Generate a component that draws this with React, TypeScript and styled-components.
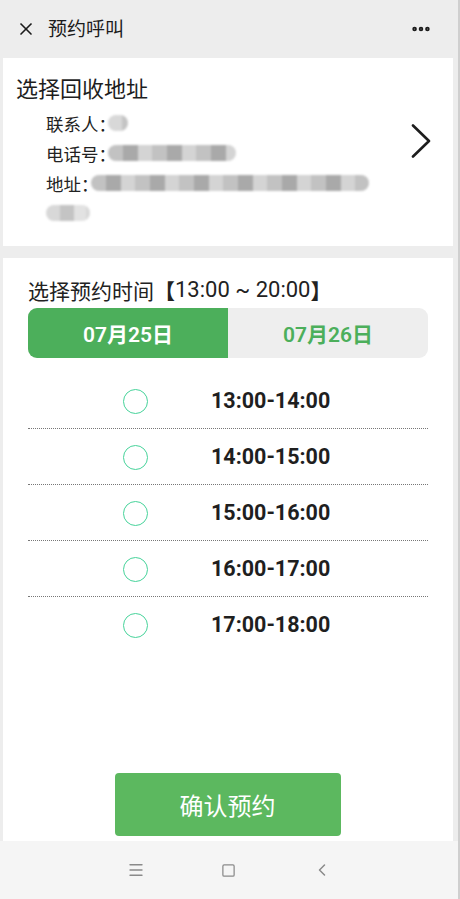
import React from "react";
import styled, { createGlobalStyle } from "styled-components";
import { X, MoreHorizontal, Menu, Square, ChevronLeft } from "lucide-react";

const GlobalStyle = createGlobalStyle`
  html, body {
    margin: 0;
    padding: 0;
    background: #ededed;
  }
  body {
    font-family: "Noto Sans CJK SC", "Noto Sans", Roboto, sans-serif;
  }
`;

const Page = styled.div`
  width: 460px;
  height: 899px;
  display: flex;
  flex-direction: column;
  background: #ededed;
  border-right: 2px solid #cfcfcf;
  box-sizing: border-box;
  overflow: hidden;
`;

const TopBar = styled.div`
  height: 57px;
  display: flex;
  align-items: center;
  padding: 0 26px 0 16px;
  color: #1b1b1b;
`;

const TopTitle = styled.div`
  margin-left: 12px;
  font-size: 19px;
  flex: 1;
  margin-top: -2px;
`;

const Card = styled.div<{ $grow?: boolean }>`
  background: #ffffff;
  margin: 1px 5px 0 3px;
  ${(p) => (p.$grow ? "flex: 1;" : "")}
`;

const AddressCard = styled(Card)`
  height: 188px;
  display: flex;
  align-items: center;
  padding: 0 22px 0 13px;
`;

const AddressBody = styled.div`
  flex: 1;
  align-self: flex-start;
  padding-top: 13px;
`;

const SectionTitle = styled.div`
  font-size: 22px;
  color: #1e1e1e;
  line-height: 32px;
`;

const InfoLine = styled.div`
  display: flex;
  align-items: center;
  height: 30px;
  margin-left: 30px;
  font-size: 17.5px;
  color: #222;
`;

const Blur = styled.div<{ $dark?: boolean }>`
  height: 16px;
  border-radius: 8px;
  filter: blur(1.2px);
  background: ${(p) =>
    p.$dark
      ? "repeating-linear-gradient(90deg, #c2c2c2 0 15px, #a9a9a9 15px 30px, #d4d4d4 30px 44px)"
      : "repeating-linear-gradient(90deg, #d8d8d8 0 14px, #c4c4c4 14px 28px, #e2e2e2 28px 40px)"};
`;

const Chevron = styled.svg`
  margin-top: -22px;
  flex-shrink: 0;
`;

const TimeCard = styled(Card)`
  margin-top: 12px;
  padding: 18px 25px 0 25px;
  display: flex;
  flex-direction: column;
`;

const TimeTitle = styled.div`
  font-size: 21px;
  color: #222;
  line-height: 28px;
  display: flex;
  align-items: center;
`;

const Bracket = styled.span`
  font-weight: bold;
`;

const Range = styled.span`
  font-family: Roboto, sans-serif;
  font-size: 22px;
`;

const Tabs = styled.div`
  margin-top: 4px;
  height: 50px;
  display: flex;
  border-radius: 9px;
  overflow: hidden;
  background: #eeeeee;
`;

const Tab = styled.div<{ $active?: boolean }>`
  flex: 1;
  display: flex;
  align-items: center;
  justify-content: center;
  font-size: 21px;
  font-weight: 600;
  background: ${(p) => (p.$active ? "#4caf5b" : "transparent")};
  color: ${(p) => (p.$active ? "#ffffff" : "#4caf5b")};
  font-family: Roboto, "Noto Sans CJK SC", sans-serif;
`;

const SlotList = styled.div`
  margin-top: 15px;
`;

const Slot = styled.div<{ $last?: boolean }>`
  height: 55px;
  display: flex;
  align-items: center;
  padding-left: 95px;
  border-bottom: 1px dotted ${(p) => (p.$last ? "transparent" : "#777")};
`;

const Radio = styled.div`
  width: 23px;
  height: 23px;
  border-radius: 50%;
  border: 1.6px solid #46d39a;
  margin-top: 2px;
`;

const SlotText = styled.div`
  margin-left: 63px;
  font-size: 21.5px;
  font-weight: bold;
  color: #1f1f1f;
  font-family: Roboto, sans-serif;
`;

const ButtonRow = styled.div`
  margin-top: auto;
  display: flex;
  justify-content: center;
  padding-bottom: 5px;
  padding-right: 1px;
`;

const ConfirmButton = styled.button`
  width: 226px;
  height: 63px;
  border: none;
  border-radius: 4px;
  background: #5cb85f;
  color: #fff;
  font-size: 24px;
  font-family: "Noto Sans CJK SC", sans-serif;
`;

const NavBar = styled.div`
  height: 58px;
  background: #f5f5f5;
  display: flex;
  align-items: center;
  justify-content: center;
  gap: 76px;
  color: #8a8a8a;
`;

const slots = ["13:00-14:00", "14:00-15:00", "15:00-16:00", "16:00-17:00", "17:00-18:00"];

export default function App() {
  return (
    <>
      <GlobalStyle />
      <Page>
        <TopBar>
          <X size={20} strokeWidth={2} />
          <TopTitle>预约呼叫</TopTitle>
          <MoreHorizontal size={22} strokeWidth={3} />
        </TopBar>
        <AddressCard>
          <AddressBody>
            <SectionTitle>选择回收地址</SectionTitle>
            <InfoLine style={{ marginTop: 5 }}>
              联系人：<Blur style={{ width: 20, marginLeft: -8 }} />
            </InfoLine>
            <InfoLine>
              电话号：<Blur $dark style={{ width: 128, marginLeft: -8 }} />
            </InfoLine>
            <InfoLine>
              地址：<Blur $dark style={{ width: 278, marginLeft: -8 }} />
            </InfoLine>
            <InfoLine>
              <Blur style={{ width: 44 }} />
            </InfoLine>
          </AddressBody>
          <Chevron width="20" height="34" viewBox="0 0 20 34">
            <polyline points="2,1.5 18,17 2,32.5" fill="none" stroke="#1d1d1d" strokeWidth="2.6" strokeLinecap="round" strokeLinejoin="round" />
          </Chevron>
        </AddressCard>
        <TimeCard $grow>
          <TimeTitle>
            选择预约时间<Bracket>【</Bracket>
            <Range>13:00 ~ 20:00</Range>
            <Bracket>】</Bracket>
          </TimeTitle>
          <Tabs>
            <Tab $active>07月25日</Tab>
            <Tab>07月26日</Tab>
          </Tabs>
          <SlotList>
            {slots.map((s, i) => (
              <Slot key={s} $last={i === slots.length - 1}>
                <Radio />
                <SlotText>{s}</SlotText>
              </Slot>
            ))}
          </SlotList>
          <ButtonRow>
            <ConfirmButton>确认预约</ConfirmButton>
          </ButtonRow>
        </TimeCard>
        <NavBar>
          <Menu size={18} strokeWidth={1.8} />
          <Square size={15} strokeWidth={2} />
          <ChevronLeft size={20} strokeWidth={1.8} />
        </NavBar>
      </Page>
    </>
  );
}
